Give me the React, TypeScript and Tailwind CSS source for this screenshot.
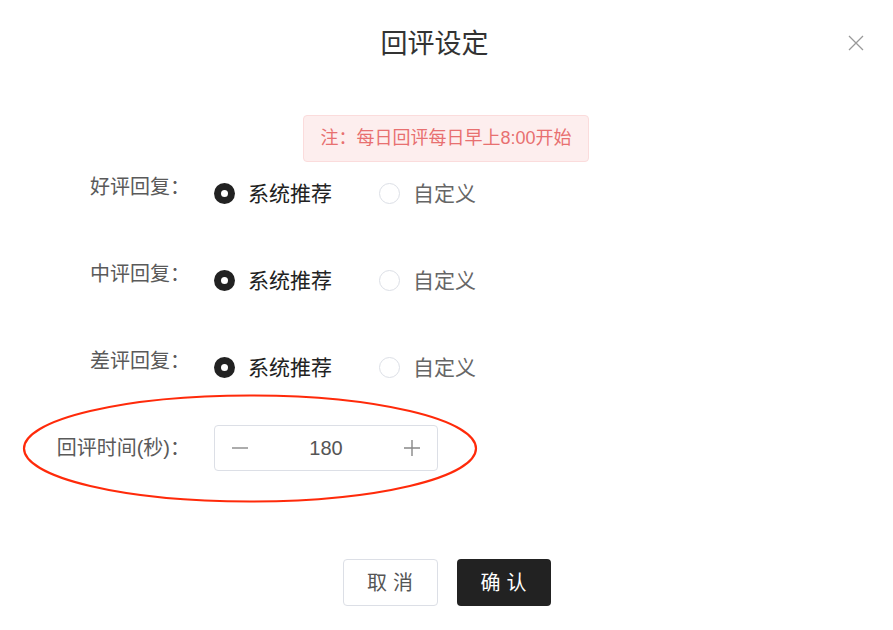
import { useState } from 'react';

const font = { fontFamily: '"Liberation Sans", "Noto Sans CJK SC", sans-serif' };

const Radio = ({ checked, label, onClick }: { checked: boolean; label: string; onClick: () => void }) => (
  <button onClick={onClick} className="flex items-center gap-[13px]">
    {checked ? (
      <span className="w-[21px] h-[21px] rounded-full bg-[#222] flex items-center justify-center">
        <span className="w-[7px] h-[7px] rounded-full bg-white" />
      </span>
    ) : (
      <span className="w-[21px] h-[21px] rounded-full border border-[#dcdfe6] bg-white" />
    )}
    <span className={`text-[21px] leading-none ${checked ? 'text-[#222]' : 'text-[#666]'}`}>{label}</span>
  </button>
);

const ReplyRow = ({ title }: { title: string }) => {
  const [mode, setMode] = useState('system');
  return (
    <div className="flex items-center h-[40px]">
      <div className="w-[190px] text-right text-[20px] text-[#5a5a5a] -mt-3">{title}：</div>
      <div className="ml-[24px] flex items-center gap-[47px]">
        <Radio checked={mode === 'system'} label="系统推荐" onClick={() => setMode('system')} />
        <Radio checked={mode === 'custom'} label="自定义" onClick={() => setMode('custom')} />
      </div>
    </div>
  );
};

export default function App() {
  const [seconds, setSeconds] = useState(180);

  return (
    <div className="w-[893px] h-[630px] bg-white relative overflow-hidden" style={font}>
      {/* Header */}
      <div className="pt-[27px] pr-[24px] text-center text-[27px] leading-[35px] text-[#333]">回评设定</div>
      <button className="absolute right-[28px] top-[34px] text-[#999]">
        <svg width="18" height="18" viewBox="0 0 18 18" fill="none" stroke="currentColor" strokeWidth="1.3">
          <path d="M2 2L16 16M16 2L2 16" />
        </svg>
      </button>

      {/* Notice */}
      <div className="flex justify-center mt-[53px]">
        <div className="h-[47px] w-[286px] ml-[-1px] flex items-center justify-center rounded bg-[#fdeeee] border border-[#fbdcdc] text-[18px] text-[#e87070]">
          注：每日回评每日早上8:00开始
        </div>
      </div>

      {/* Reply settings */}
      <div className="mt-[11px] flex flex-col gap-[47px]">
        <ReplyRow title="好评回复" />
        <ReplyRow title="中评回复" />
        <ReplyRow title="差评回复" />
      </div>

      {/* Reply time */}
      <div className="relative mt-[38px] flex items-center h-[46px]">
        <div className="w-[190px] text-right text-[20px] text-[#5a5a5a]">回评时间(秒)：</div>
        <div className="ml-[24px] w-[224px] h-[46px] rounded border border-[#dcdfe6] flex items-center justify-between px-[16px] text-[#888]">
          <button onClick={() => setSeconds(Math.max(0, seconds - 1))}>
            <svg width="18" height="18" viewBox="0 0 18 18" stroke="currentColor" strokeWidth="1.4">
              <path d="M1 9H17" />
            </svg>
          </button>
          <span className="text-[20px] text-[#555]">{seconds}</span>
          <button onClick={() => setSeconds(seconds + 1)}>
            <svg width="18" height="18" viewBox="0 0 18 18" stroke="currentColor" strokeWidth="1.4">
              <path d="M1 9H17M9 1V17" />
            </svg>
          </button>
        </div>
        {/* annotation ellipse */}
        <svg className="absolute left-[22px] top-[-31px] pointer-events-none" width="458" height="110" viewBox="0 0 458 110" fill="none">
          <ellipse cx="228" cy="54.5" rx="226" ry="53" stroke="#ff2a0a" strokeWidth="2.2" />
        </svg>
      </div>

      {/* Footer */}
      <div className="mt-[88px] flex justify-center gap-[19px]">
        <button className="w-[95px] h-[47px] rounded border border-[#dcdfe6] text-[20px] text-[#555] tracking-[6px] pl-[6px]">取消</button>
        <button className="w-[94px] h-[47px] rounded bg-[#222] text-[20px] text-white tracking-[6px] pl-[6px]">确认</button>
      </div>
    </div>
  );
}
